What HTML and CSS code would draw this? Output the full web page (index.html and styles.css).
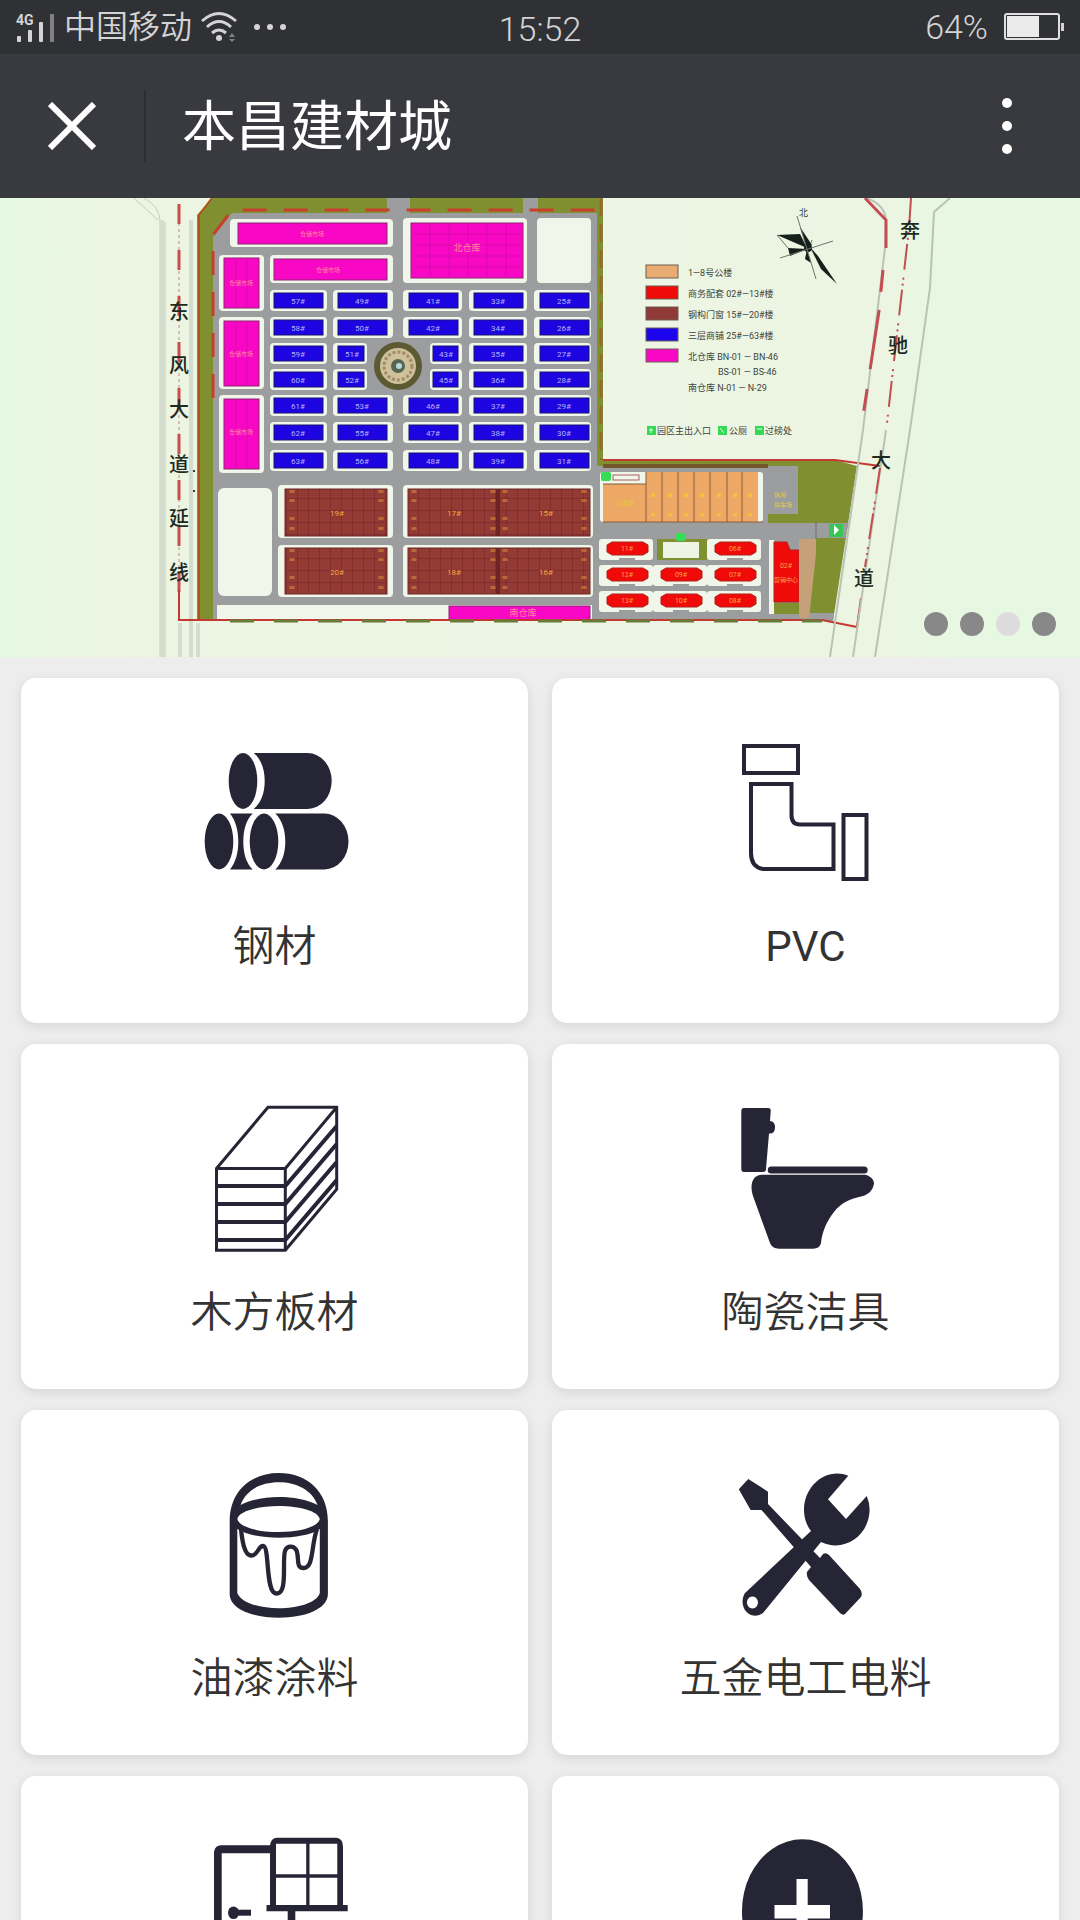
FILE: index.html
```
<!DOCTYPE html>
<html lang="zh-CN">
<head>
    <meta charset="UTF-8">
    <meta name="viewport" content="width=device-width, initial-scale=1.0">
    <title>本昌建材城</title>
    <link rel="stylesheet" href="styles.css">
</head>
<body>

    <div class="app">
        <div class="status-bar">
            <div class="status-left">
                <svg class="signal" width="42" height="32" viewBox="0 0 42 32">
                    <text class="signal-text" x="0" y="14">4G</text>
                    <rect x="1" y="25" width="4" height="6" rx="1"/>
                    <rect x="12" y="19" width="4" height="12" rx="1"/>
                    <rect x="23" y="11" width="4" height="20" rx="1"/>
                    <rect x="34" y="3" width="4" height="28" rx="1" opacity="0.5"/>
                </svg>
                <span class="carrier">中国移动</span>
                <svg class="wifi" width="38" height="32" viewBox="0 0 38 32">
                    <path d="M2 10Q19-5 36 10M7 16Q19 5 31 16M12 22Q19 16 26 22" fill="none" stroke="#d4d4d4" stroke-width="3"/>
                    <circle cx="19" cy="27" r="3"/>
                    <path d="M29 26l3-4 3 4zM29 28l3 3 3-3z" opacity="0.5"/>
                </svg>
                <svg class="more-dots" width="32" height="8" viewBox="0 0 32 8">
                    <circle cx="3" cy="4" r="3"/>
                    <circle cx="16" cy="4" r="3"/>
                    <circle cx="29" cy="4" r="3"/>
                </svg>
            </div>
            <span class="clock">15:52</span>
            <div class="status-right">
                <span class="percent">64%</span>
                <svg width="60" height="28" viewBox="0 0 60 28">
                    <rect x="1" y="1" width="54" height="25" rx="2" fill="none" stroke="#e0e0e0" stroke-width="2"/>
                    <rect x="3" y="3" width="32" height="21" fill="#ebebeb"/>
                    <rect x="57" y="10" width="3" height="8"/>
                </svg>
            </div>
        </div>

        <header class="header">
            <button class="icon-button close" aria-label="关闭">
                <svg width="48" height="48" viewBox="0 0 48 48">
                    <path d="M2 2l44 44M46 2L2 46" stroke="#fff" stroke-width="6"/>
                </svg>
            </button>
            <h1 class="title">本昌建材城</h1>
            <button class="icon-button menu" aria-label="更多">
                <svg width="12" height="58" viewBox="0 0 12 58">
                    <circle cx="6" cy="6" r="5"/>
                    <circle cx="6" cy="29" r="5"/>
                    <circle cx="6" cy="52" r="5"/>
                </svg>
            </button>
        </header>

        <main class="content">
            <section class="banner">
                <svg class="map" viewBox="0 0 1080 459">
                    <defs>
                        <linearGradient id="ground">
                            <stop offset="0" stop-color="#e6f9e3"/>
                            <stop offset="0.12" stop-color="#ecf5e2"/>
                            <stop offset="0.55" stop-color="#edf6e4"/>
                            <stop offset="0.82" stop-color="#ebf5e2"/>
                            <stop offset="0.88" stop-color="#e7f8e2"/>
                        </linearGradient>
                        <pattern id="grid" width="11" height="12" patternUnits="userSpaceOnUse">
                            <rect width="11" height="12" fill="#943a34"/>
                            <path d="M0 0H11M0 0V12" stroke="#6c2424" stroke-width="1"/>
                        </pattern>
                        <g id="lots">
                            <g fill="#f0f6ea">
                                <rect x="270" y="-3" width="57" height="21" rx="4"/>
                                <rect x="333" y="-3" width="60" height="21" rx="4"/>
                                <rect x="403" y="-3" width="59" height="21" rx="4"/>
                                <rect x="469" y="-3" width="58" height="21" rx="4"/>
                                <rect x="534" y="-3" width="57" height="21" rx="4"/>
                            </g>
                            <g class="blue">
                                <rect x="274" width="49" height="15"/>
                                <rect x="338" width="49" height="15"/>
                                <rect x="409" width="49" height="15"/>
                                <rect x="474" width="49" height="15"/>
                                <rect x="540" width="49" height="15"/>
                            </g>
                        </g>
                        <g id="lots-short">
                            <g fill="#f0f6ea">
                                <rect x="270" y="-3" width="57" height="21" rx="4"/>
                                <rect x="333" y="-3" width="34" height="21" rx="4"/>
                                <rect x="430" y="-3" width="32" height="21" rx="4"/>
                                <rect x="469" y="-3" width="58" height="21" rx="4"/>
                                <rect x="534" y="-3" width="57" height="21" rx="4"/>
                            </g>
                            <g class="blue">
                                <rect x="274" width="49" height="15"/>
                                <rect x="338" width="26" height="15"/>
                                <rect x="433" width="25" height="15"/>
                                <rect x="474" width="49" height="15"/>
                                <rect x="540" width="49" height="15"/>
                            </g>
                        </g>
                        <g id="shop">
                            <rect x="-8" y="-3" width="54" height="21" rx="3" fill="#f0f6ea"/>
                            <path d="M12 16h16v4h-16z" fill="#9c9d9f"/>
                            <path d="M0 3L5 0H36L41 3V10L36 13H5L0 10z" fill="#f00a0a" stroke="#b0221c"/>
                        </g>
                    </defs>
                    <rect width="1080" height="459" fill="url(#ground)"/>

                    <!-- west road -->
                    <path d="M134 0L158 22M144 0Q159 8 160 22V459M165 24V459M192 24V459" fill="none" stroke="#c3ccbd"/>
                    <path d="M162 22V459M180 425V459M191 22V459M198 425V459" stroke="#d3dccd" stroke-width="4"/>
                    <path d="M179 25V405" stroke="#d3c1b9" stroke-width="2" stroke-dasharray="3 3"/>
                    <path d="M179 6V405" stroke="#c94f4c" stroke-width="3" stroke-dasharray="20 26"/>

                    <!-- site -->
                    <path d="M212 0H603V262H835L857 268L833 423H197V17z" fill="#809030"/>
                    <path d="M213 39L232 15H387V0H410V15H523V0H538V15H597V268H798V316H768V325H849L845 340H816L809 422H213z" fill="#9c9d9f"/>
                    <path d="M809 415H834L833 423H809z" fill="#9c9d9f"/>
                    <path d="M603 268H768" stroke="#74572d" stroke-width="4"/>
                    <g fill="#f0f6ea">
                        <rect x="230" y="21" width="163" height="28" rx="4"/>
                        <rect x="270" y="57" width="123" height="28" rx="4"/>
                        <rect x="403" y="20" width="124" height="65" rx="4"/>
                        <rect x="537" y="20" width="54" height="65" rx="4"/>
                        <rect x="219" y="57" width="45" height="56" rx="4"/>
                        <rect x="219" y="119" width="45" height="72" rx="4"/>
                        <rect x="219" y="197" width="45" height="78" rx="4"/>
                        <rect x="218" y="290" width="54" height="108" rx="6"/>
                        <rect x="278" y="287" width="115" height="53" rx="4"/>
                        <rect x="278" y="347" width="115" height="52" rx="4"/>
                        <rect x="403" y="287" width="190" height="53" rx="4"/>
                        <rect x="403" y="347" width="190" height="52" rx="4"/>
                        <rect x="217" y="407" width="375" height="14"/>
                        <rect x="600" y="274" width="163" height="50" rx="3"/>
                        <rect x="769" y="342" width="5" height="74"/>
                    </g>
                    <g class="pink">
                        <rect x="238" y="25" width="149" height="21"/>
                        <rect x="274" y="61" width="113" height="21"/>
                        <rect x="411" y="25" width="112" height="55"/>
                        <rect x="224" y="60" width="35" height="50"/>
                        <rect x="224" y="123" width="35" height="65"/>
                        <rect x="224" y="201" width="35" height="70"/>
                        <rect x="449" y="408" width="141" height="14"/>
                    </g>
                    <path d="M236 60V110M247 60V110M236 123V188M247 123V188M236 201V271M247 201V271M411 36H523M411 47H523M411 58H523M411 69H523M430 25V80M449 25V80M468 25V80M487 25V80M506 25V80" stroke="#d80ca8" fill="none"/>
                    <g class="pink-text">
                        <text x="312" y="38">仓储市场</text>
                        <text x="328" y="74">仓储市场</text>
                        <text x="241" y="87">仓储市场</text>
                        <text x="241" y="158">仓储市场</text>
                        <text x="241" y="236">仓储市场</text>
                        <text class="large" x="523" y="418">南仓库</text>
                        <text class="large" x="467" y="53">北仓库</text>
                    </g>

                    <use href="#lots" y="95"/>
                    <use href="#lots" y="122"/>
                    <use href="#lots-short" y="148"/>
                    <use href="#lots-short" y="174"/>
                    <use href="#lots" y="200"/>
                    <use href="#lots" y="227"/>
                    <use href="#lots" y="255"/>
                    <g class="lot-text">
                        <text y="106"><tspan x="298">57#</tspan><tspan x="362">49#</tspan><tspan x="433">41#</tspan><tspan x="498">33#</tspan><tspan x="564">25#</tspan></text>
                        <text y="133"><tspan x="298">58#</tspan><tspan x="362">50#</tspan><tspan x="433">42#</tspan><tspan x="498">34#</tspan><tspan x="564">26#</tspan></text>
                        <text y="159"><tspan x="298">59#</tspan><tspan x="352">51#</tspan><tspan x="446">43#</tspan><tspan x="498">35#</tspan><tspan x="564">27#</tspan></text>
                        <text y="185"><tspan x="298">60#</tspan><tspan x="352">52#</tspan><tspan x="446">45#</tspan><tspan x="498">36#</tspan><tspan x="564">28#</tspan></text>
                        <text y="211"><tspan x="298">61#</tspan><tspan x="362">53#</tspan><tspan x="433">46#</tspan><tspan x="498">37#</tspan><tspan x="564">29#</tspan></text>
                        <text y="238"><tspan x="298">62#</tspan><tspan x="362">55#</tspan><tspan x="433">47#</tspan><tspan x="498">38#</tspan><tspan x="564">30#</tspan></text>
                        <text y="266"><tspan x="298">63#</tspan><tspan x="362">56#</tspan><tspan x="433">48#</tspan><tspan x="498">39#</tspan><tspan x="564">31#</tspan></text>
                    </g>

                    <!-- round plaza -->
                    <circle cx="398" cy="168" r="24" fill="#5c5a33"/>
                    <circle cx="398" cy="168" r="18" fill="#cfc19a"/>
                    <circle cx="398" cy="168" r="14" fill="none" stroke="#a08e66" stroke-width="3" stroke-dasharray="3 2"/>
                    <circle cx="398" cy="168" r="7" fill="#54664f"/>
                    <circle cx="399" cy="168" r="3" fill="#b8d8dc"/>

                    <!-- door and window halls -->
                    <g fill="url(#grid)" stroke="#6c2424">
                        <rect x="285" y="291" width="102" height="47"/>
                        <rect x="285" y="350" width="102" height="46"/>
                        <rect x="408" y="291" width="182" height="47"/>
                        <rect x="408" y="350" width="182" height="46"/>
                    </g>
                    <path d="M498 291V338M498 350V396" stroke="#6c2424" stroke-width="4"/>
                    <path d="M292 292V338M381 292V338M414 292V338M493 292V338M505 292V338M584 292V338M292 351V396M381 351V396M414 351V396M493 351V396M505 351V396M584 351V396" stroke="#cf8a3a" stroke-width="5" stroke-dasharray="3 6 3 15 3 7" opacity="0.6"/>
                    <g class="hall-text">
                        <text y="318"><tspan x="337">19#</tspan><tspan x="454">17#</tspan><tspan x="546">15#</tspan></text>
                        <text y="377"><tspan x="337">20#</tspan><tspan x="454">18#</tspan><tspan x="546">16#</tspan></text>
                    </g>

                    <!-- apartments -->
                    <path d="M603 286H646V274H758V324H603z" fill="#eda866"/>
                    <path d="M646 274V324M662 274V324M678 274V324M694 274V324M710 274V324M727 274V324M742 274V324M603 286H646M603 324H763" stroke="#8a5c3a"/>
                    <rect x="613" y="277" width="26" height="5" fill="none" stroke="#a2605a"/>
                    <rect x="601" y="274" width="10" height="9" rx="2" fill="#33dd55"/>
                    <path d="M653 295V318M670 295V318M686 295V318M702 295V318M719 295V318M735 295V318M750 295V318" stroke="#f2c043" stroke-width="4" stroke-dasharray="4 16"/>
                    <text class="plan-text" x="625" y="307">公寓楼</text>
                    <text class="plan-text" x="780" y="299">休闲</text>
                    <text class="plan-text" x="783" y="309">停车场</text>

                    <!-- business buildings -->
                    <use href="#shop" x="607" y="344"/>
                    <use href="#shop" x="715" y="344"/>
                    <use href="#shop" x="607" y="370"/>
                    <use href="#shop" x="661" y="370"/>
                    <use href="#shop" x="715" y="370"/>
                    <use href="#shop" x="607" y="396"/>
                    <use href="#shop" x="661" y="396"/>
                    <use href="#shop" x="715" y="396"/>
                    <rect x="657" y="341" width="50" height="21" fill="#809030"/>
                    <rect x="663" y="344" width="36" height="16" fill="#eef4e4"/>
                    <rect x="676" y="335" width="10" height="8" rx="2" fill="#33dd55"/>
                    <path d="M774 344H787L790 352H799V404H774z" fill="#f00a0a" stroke="#b0221c"/>
                    <rect x="774" y="405" width="25" height="11" fill="#809030"/>
                    <path d="M799 341H816V356L809 420H799z" fill="#c5a078"/>
                    <path d="M816 324V341" stroke="#6d6d6d"/>
                    <rect x="829" y="326" width="14" height="13" fill="#35c655"/>
                    <path d="M834 327L839 332L834 337z" fill="#fff"/>
                    <g class="shop-text">
                        <text y="353"><tspan x="627">11#</tspan><tspan x="735">06#</tspan></text>
                        <text y="379"><tspan x="627">12#</tspan><tspan x="681">09#</tspan><tspan x="735">07#</tspan></text>
                        <text y="405"><tspan x="627">13#</tspan><tspan x="681">10#</tspan><tspan x="735">08#</tspan></text>
                        <text x="786" y="370">02#</text>
                        <text class="small" x="786" y="384">营销中心</text>
                    </g>

                    <!-- red boundary -->
                    <path d="M199 422V17L212 0" fill="none" stroke="#b5501f" stroke-width="2"/>
                    <path d="M213 200V37L232 12H603" fill="none" stroke="#c8402c" stroke-width="3" stroke-dasharray="24 17"/>
                    <path d="M601 0V262" stroke="#96692f" stroke-width="3" stroke-dasharray="18 8"/>
                    <path d="M603 262H835L880 268M179 392V422H822L857 429L861 400" fill="none" stroke="#c43a32" stroke-width="2"/>
                    <path d="M230 423H822" stroke="#687b38" stroke-width="3" stroke-dasharray="24 20"/>

                    <!-- east road -->
                    <path d="M886 22L885 50L863 232L830 459M867 0Q885 7 886 22M950 0L934 14L930 90L910 232L875 459M886 232L853 459" fill="none" stroke="#b9c3b6" stroke-width="2"/>
                    <path d="M865 0L886 22V50" fill="none" stroke="#c44d50" stroke-width="3"/>
                    <path d="M883 72L879 113L863 218" fill="none" stroke="#c44d50" stroke-width="3" stroke-dasharray="22 18 60 20"/>
                    <path d="M911 0L909 30L887 225M880 270L865 369" fill="none" stroke="#c44d50" stroke-width="2" stroke-dasharray="26 8 2 4 2 4"/>

                    <g class="road-text">
                        <text x="179" y="121">东</text>
                        <text x="179" y="175">风</text>
                        <text x="179" y="219">大</text>
                        <text x="179" y="274">道</text>
                        <text x="179" y="328">延</text>
                        <text x="179" y="382">线</text>
                        <text x="910" y="40">奔</text>
                        <text x="898" y="155">驰</text>
                        <text x="881" y="270">大</text>
                        <text x="864" y="388">道</text>
                    </g>
                    <circle cx="194" cy="273" r="1"/>
                    <circle cx="194" cy="293" r="1"/>

                    <!-- compass -->
                    <g fill="#16201a">
                        <path d="M777 37L800 36L807 50z"/>
                        <path d="M800 29L812 47L807 51z"/>
                        <path d="M788 50L807 51L790 58z"/>
                        <path d="M807 51L811 65L805 61z"/>
                        <path d="M810 49L818 58L837 86L821 71z"/>
                        <circle cx="808" cy="50" r="4"/>
                    </g>
                    <path d="M777 37L788 50M780 60L833 43M797 18L816 81M811 45L812 42" stroke="#6b756b" fill="none"/>
                    <text class="legend-text" x="799" y="18">北</text>

                    <!-- legend -->
                    <g stroke="#6f5c50">
                        <rect x="646" y="67" width="32" height="13" fill="#e8ab72"/>
                        <rect x="646" y="88" width="32" height="13" fill="#f00a0a"/>
                        <rect x="646" y="109" width="32" height="13" fill="#8e3a36"/>
                        <rect x="646" y="130" width="32" height="13" fill="#1c05ee"/>
                        <rect x="646" y="151" width="32" height="13" fill="#f808c4"/>
                    </g>
                    <g class="legend-text">
                        <text x="688" y="78">1—8号公楼</text>
                        <text x="688" y="99">商务配套 02#—13#楼</text>
                        <text x="688" y="120">钢构门窗 15#—20#楼</text>
                        <text x="688" y="141">三层商铺 25#—63#楼</text>
                        <text x="688" y="162">北仓库 BN-01 — BN-46</text>
                        <text x="718" y="177">BS-01 — BS-46</text>
                        <text x="688" y="193">南仓库 N-01 — N-29</text>
                        <text x="657" y="236">园区主出入口</text>
                        <text x="729" y="236">公厕</text>
                        <text x="765" y="236">过磅处</text>
                    </g>
                    <g fill="#35d955">
                        <rect x="647" y="228" width="9" height="9"/>
                        <rect x="718" y="228" width="9" height="9"/>
                        <rect x="755" y="228" width="9" height="9"/>
                    </g>
                    <path d="M651 230V235M649 232H653M720 230L724 235M757 231H762" stroke="#e6ffe6" fill="none"/>
                </svg>
                <div class="dots">
                    <button class="dot" aria-label="第1张"></button>
                    <button class="dot" aria-label="第2张"></button>
                    <button class="dot active" aria-label="第3张"></button>
                    <button class="dot" aria-label="第4张"></button>
                </div>
            </section>

            <nav class="categories">
                <a class="card" href="#steel">
                    <svg class="card-icon" viewBox="0 0 180 180">
                        <ellipse cx="58" cy="58" rx="14.3" ry="28"/>
                        <path d="M68.7 30C76 36 79.7 46 79.7 58S76 80 68.7 86H122.7A24 28 0 0 0 122.7 30z"/>
                        <ellipse cx="34" cy="118.5" rx="14.3" ry="28"/>
                        <path d="M45 90.5C51 98 53.3 108 53.3 118.5S51 139 45 146.5H67.7C61 140 58.3 130 58.3 118.5S61 97 67.7 90.5z"/>
                        <ellipse cx="79" cy="118.5" rx="14.3" ry="28"/>
                        <path d="M90.3 90.5C97 97 100.3 107 100.3 118.5S97 140 90.3 146.5H139.5A24 28 0 0 0 139.5 90.5z"/>
                    </svg>
                    <span class="card-label">钢材</span>
                </a>
                <a class="card" href="#pvc">
                    <svg class="card-icon line" viewBox="0 0 180 180">
                        <path d="M28 23H82V50H28z"/>
                        <path d="M35 61H75.5V92Q75.5 101.5 84 101.5H117.5V146H47Q35 144 35 130z"/>
                        <path d="M127.5 92H150.5V156H127.5z"/>
                    </svg>
                    <span class="card-label latin">PVC</span>
                </a>
                <a class="card" href="#wood">
                    <svg class="card-icon line" viewBox="0 0 180 180">
                        <path d="M31.5 79.5L83 18.3H151.7V100.3L100.3 161.3H31.5zM31.5 79.5H100.3V161.3M100.3 79.5L151.7 18.3" stroke-width="3"/>
                        <path d="M31.5 97H100.3L151.7 37M31.5 115H100.3L151.7 55M31.5 133H100.3L151.7 73M31.5 151H100.3L151.7 91"/>
                    </svg>
                    <span class="card-label">木方板材</span>
                </a>
                <a class="card" href="#ceramic">
                    <svg class="card-icon" viewBox="0 0 180 180">
                        <path d="M28 19H52Q55 19 54.7 22L54 32Q59 32 59 38.5T53 44.5L50 80Q50 83 47 83H28Q25.3 83 25.3 80V22Q25.3 19 28 19z"/>
                        <rect x="51.7" y="77.5" width="100" height="7" rx="3.5"/>
                        <path d="M46 85.7H149C155 87 158 91 158 94.5C157 101 153 105 147 107C133 110 125 114 118 123C110 133 106 144 105 154Q104 159.7 97 159.7H63Q56 159.7 54 154L37 107C34 98 35 86 46 85.7z"/>
                    </svg>
                    <span class="card-label">陶瓷洁具</span>
                </a>
                <a class="card" href="#paint">
                    <svg class="card-icon" viewBox="0 0 180 180">
                        <path fill-rule="evenodd" d="M44.7 66C44.7 36 66 18 93.8 18S142.9 36 142.9 66V139C142.9 154 120 162.7 93.8 162.7S44.7 154 44.7 139zM55.6 50C61 35 76 27.3 93.8 27.3S127 35 132.5 50C122 44.5 108 42 93.8 42S66 44.5 55.6 50zM52.3 64C54 56 73 51 93.8 51S133 56 134.8 64C133 72 115 77 93.8 77S54 72 52.3 64zM52.3 74C62 80 78 82.7 93.8 82.7S126 80 134.8 74V138C132 148 112 153.3 93.8 153.3S56 148 52.3 138z"/>
                        <path d="M56 74C57 84 59 100 66 100.5C73 101 73 91 78 91C85 91 80 139 91.5 138.5C103 139 97 106 100 96C102 90 110 90 112 97C114 104 111 113 118.5 113C129 113 126 90 132 74" fill="none" stroke="#262535" stroke-width="4.3"/>
                    </svg>
                    <span class="card-label">油漆涂料</span>
                </a>
                <a class="card" href="#hardware">
                    <svg class="card-icon" viewBox="0 0 180 180">
                        <path d="M22.8 34.3L32.3 24L52 36.7V49L104 103L107 99Q110 97 113 100L144 134Q147 138 145 142L129 159Q127 161 124 158L93 125Q90 120 91 117L95 112L45.5 55H34.6z"/>
                        <path fill-rule="evenodd" d="M132.3 20.7C111 12 88 30 88 55Q88 67 95 76L29 138C24 146 27 157 35 160Q42 162 47 158L105 87C128 98 153 81 153.6 55Q153.7 48 150.7 41L130 64L112 44.3zM36.5 141.5A5.5 6 0 1 1 36.4 141.5z"/>
                    </svg>
                    <span class="card-label">五金电工电料</span>
                </a>
                <a class="card" href="#doors" aria-label="门窗">
                    <svg class="card-icon" viewBox="0 0 180 180">
                        <path d="M29 162V31Q30 24.3 36 24.3H85Q86 16.7 92 16.7H151Q158 17 158 26V84H162.7V90.3H110.3V162zM36.7 32.3V154H102.7V90.3H81.5V84H85V32.3zM91 22.7V53.3H121.2V22.7zM124.5 22.7V53.3H152.3V22.7zM91 56.7V84H121.2V56.7zM124.5 56.7V84H152.3V56.7z" fill-rule="evenodd"/>
                        <ellipse cx="48.5" cy="91.7" rx="5.5" ry="6.3"/>
                        <path d="M50 88.7H66V94.7H50z"/>
                    </svg>
                </a>
                <a class="card" href="#more" aria-label="更多">
                    <svg class="card-icon" viewBox="0 0 180 180">
                        <path d="M86.5 18.3A60.5 72 0 1 1 86.4 18.3zM80.5 58V84H58.5V97.5H80.5V123H91.7V97.5H114V84H91.7V58z" fill-rule="evenodd"/>
                    </svg>
                </a>
            </nav>
        </main>
    </div>

</body>
</html>
```
FILE: styles.css
```
* {
    box-sizing: border-box;
}
body {
    margin: 0;
    font-family: Roboto, "Noto Sans CJK SC", sans-serif;
    background-color: #ededed;
    color: #333;
}
button {
    border: none;
    padding: 0;
    background: none;
    cursor: pointer;
}
.app {
    display: flex;
    flex-direction: column;
    height: 100vh;
    overflow: hidden;
}

/* status bar */
.status-bar {
    display: grid;
    grid-template-columns: 1fr auto 1fr;
    align-items: center;
    height: 54px;
    flex: none;
    padding: 0 16px;
    background-color: #303135;
    color: #d4d4d4;
    fill: #d4d4d4;
    font-size: 32px;
    font-weight: 350;
}
.status-left,
.status-right {
    display: flex;
    align-items: center;
}
.status-right {
    justify-content: flex-end;
    gap: 16px;
}
.signal-text {
    font-size: 14px;
    font-weight: 700;
}
.carrier {
    margin: 0 8px 0 6px;
    line-height: 44px;
}
.more-dots {
    margin-left: 16px;
}
.clock,
.percent {
    font-size: 34px;
}
.clock {
    padding-top: 4px;
}

/* title bar */
.header {
    display: flex;
    align-items: center;
    height: 144px;
    flex: none;
    background-color: #393a3f;
    color: #fff;
    fill: #fff;
}
.icon-button {
    display: flex;
    align-items: center;
    justify-content: center;
    width: 146px;
    height: 72px;
}
.close {
    border-right: 2px solid #2e2f33;
}
.title {
    flex: 1;
    margin: 0;
    padding: 4px 0 0 36px;
    font-size: 54px;
    line-height: 72px;
    font-weight: 400;
}

.content {
    flex: 1;
    min-height: 0;
    overflow-y: auto;
    scrollbar-width: none;
}

/* banner */
.banner {
    position: relative;
}
.map {
    display: block;
    width: 100%;
    text-anchor: middle;
}
.pink {
    fill: #f808c4;
    stroke: #8c2470;
}
.blue {
    fill: #1c05e0;
    stroke: #1a1270;
}
.pink-text {
    font-size: 6px;
    fill: #ff8a9c;
}
.large {
    font-size: 9px;
}
.lot-text {
    font-size: 8px;
    fill: #b9b0fa;
}
.hall-text {
    font-size: 8px;
    fill: #f0a63c;
}
.shop-text {
    font-size: 7px;
    fill: #ffa04a;
}
.small {
    font-size: 6px;
}
.plan-text {
    font-size: 6px;
    fill: #e6c93c;
}
.road-text {
    font-size: 20px;
    font-weight: 500;
    fill: #1c2a22;
}
.legend-text {
    font-size: 9px;
    fill: #3c443c;
    text-anchor: start;
}
.dots {
    position: absolute;
    right: 24px;
    bottom: 21px;
    display: flex;
    gap: 12px;
}
.dot {
    width: 24px;
    height: 24px;
    border-radius: 50%;
    background-color: #888;
}
.dot.active {
    background-color: #dcdcdc;
}

/* categories */
.categories {
    display: grid;
    grid-template-columns: 1fr 1fr;
    gap: 21px 24px;
    padding: 21px;
}
.card {
    display: flex;
    flex-direction: column;
    align-items: center;
    height: 345px;
    padding-top: 45px;
    border-radius: 15px;
    background-color: #fff;
    box-shadow: 0 3px 12px rgba(0, 0, 0, 0.1);
    color: #333;
    text-decoration: none;
}
.card-icon {
    width: 180px;
    height: 180px;
    fill: #262535;
}
.line {
    fill: none;
    stroke: #262535;
    stroke-width: 4;
}
.card-label {
    margin-top: 14px;
    font-size: 42px;
    line-height: 60px;
    font-weight: 350;
}
.latin {
    font-weight: 400;
}
```
